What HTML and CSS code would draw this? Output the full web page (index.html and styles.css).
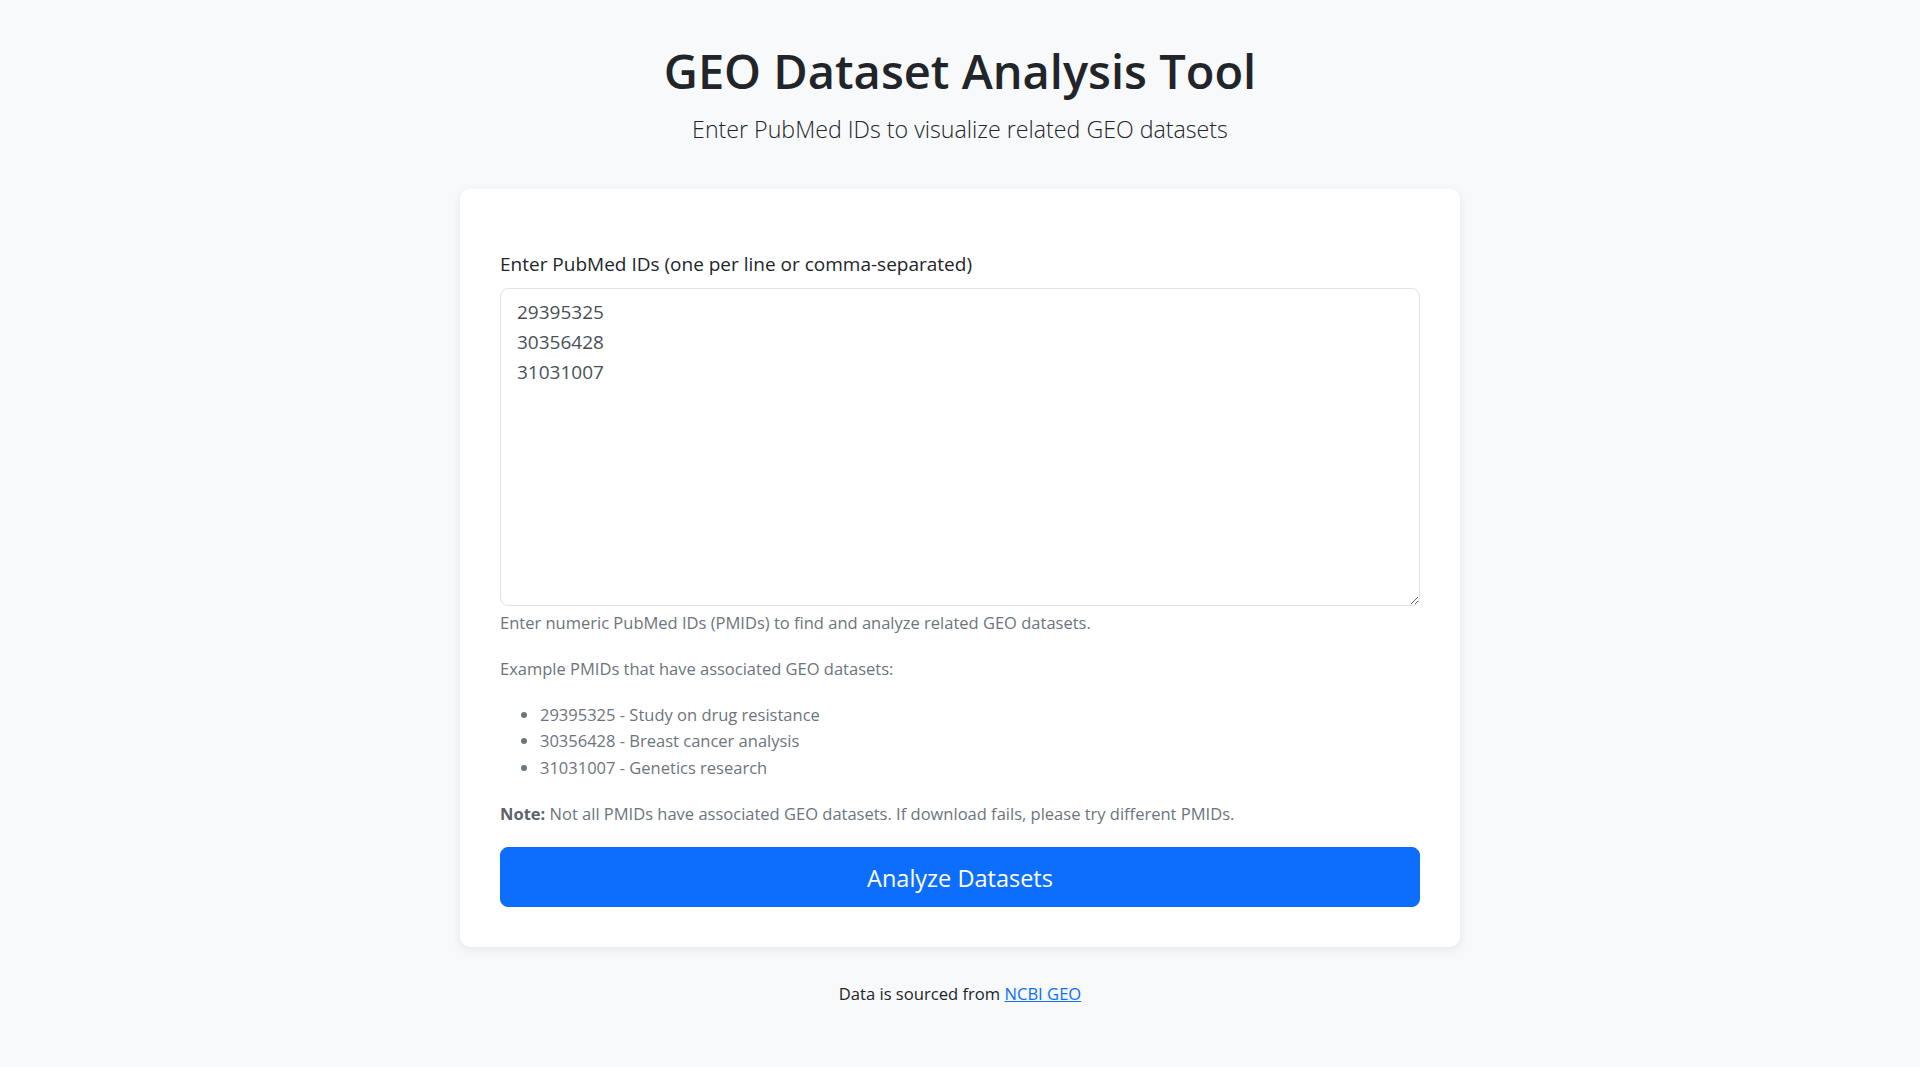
FILE: index.html
```html
<!DOCTYPE html>
<html lang="en">
<head>
<meta charset="utf-8">
<title>GEO Dataset Analysis Tool</title>
<link rel="stylesheet" href="styles.css">
</head>
<body>
<div class="page">
  <header class="header">
    <h1 class="title">GEO Dataset Analysis Tool</h1>
    <p class="subtitle">Enter PubMed IDs to visualize related GEO datasets</p>
  </header>
  <main class="card">
    <form class="form">
      <label class="label" for="pmids">Enter PubMed IDs (one per line or comma-separated)</label>
      <textarea id="pmids" class="textarea" rows="10">29395325
30356428
31031007</textarea>
      <div class="help">
        <p class="help-p">Enter numeric PubMed IDs (PMIDs) to find and analyze related GEO datasets.</p>
        <p class="help-p">Example PMIDs that have associated GEO datasets:</p>
        <ul class="help-list">
          <li>29395325 - Study on drug resistance</li>
          <li>30356428 - Breast cancer analysis</li>
          <li>31031007 - Genetics research</li>
        </ul>
        <p class="help-p"><strong class="note">Note:</strong> Not all PMIDs have associated GEO datasets. If download fails, please try different PMIDs.</p>
      </div>
      <button type="button" class="btn">Analyze Datasets</button>
    </form>
  </main>
  <footer class="footer">Data is sourced from <a class="link" href="#">NCBI GEO</a></footer>
</div>
</body>
</html>
```
FILE: styles.css
```css
* { box-sizing: border-box; }
html, body { margin: 0; padding: 0; }
body {
  background: #f8f9fa;
  color: #212529;
  font-family: "Segoe UI", "Open Sans", "Noto Sans", sans-serif;
  font-size: 18px;
  line-height: 1.5;
}
.page {
  max-width: 1000px;
  margin: 0 auto;
  padding-top: 43px;
}
.header { text-align: center; }
.title {
  margin: 0;
  font-size: 47px;
  line-height: 57.6px;
  font-weight: 600;
  color: #212529;
}
.subtitle {
  margin: 10px 0 0;
  font-size: 23.2px;
  line-height: 36px;
  font-weight: 300;
  color: #212529;
}
.card {
  margin-top: 42px;
  background: #fff;
  border-radius: 10px;
  box-shadow: 0 3px 10px rgba(0,0,0,0.08);
  padding: 40px;
}
.form { display: flex; flex-direction: column; padding-top: 21px; }
.label {
  font-size: 19px;
  line-height: 28px;
  margin-bottom: 9px;
  padding-bottom: 1px;
  color: #212529;
}
.textarea {
  display: block;
  width: 100%;
  font-family: inherit;
  font-size: 19px;
  line-height: 30px;
  padding: 8px 16px;
  color: #495057;
  border: 1px solid #dee2e6;
  border-radius: 8px;
  background: #fff;
  resize: vertical;
}
.help {
  margin-top: 4px;
  font-size: 16.5px;
  line-height: 26px;
  color: #6c757d;
}
.help-p { margin: 0 0 20px; }
.help-list { margin: 0 0 20px; padding-left: 40px; }
.help-list li { line-height: 26.5px; }
.note { font-weight: 700; color: #5c636a; }
.btn {
  display: block;
  width: 100%;
  height: 60px;
  border: 1px solid #0d6efd;
  background: #0d6efd;
  color: #fff;
  border-radius: 8px;
  font-family: inherit;
  font-size: 23.5px;
  line-height: 33px;
  padding: 12px 16px 10px;
  cursor: pointer;
}
.footer {
  text-align: center;
  margin-top: 33px;
  font-size: 16.6px;
  line-height: 27px;
}
.link { color: #0d6efd; text-decoration: underline; }
```
